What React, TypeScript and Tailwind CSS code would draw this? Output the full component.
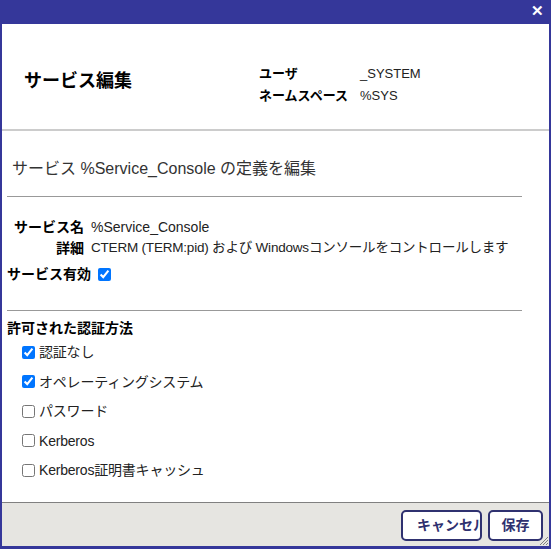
import React from "react";

const FONT = { fontFamily: '"Liberation Sans", Arial, "Noto Sans CJK JP", sans-serif' };

const methods = [
  { label: "認証なし", checked: true },
  { label: "オペレーティングシステム", checked: true },
  { label: "パスワード", checked: false },
  { label: "Kerberos", checked: false },
  { label: "Kerberos証明書キャッシュ", checked: false },
];

function Checkbox({ checked }: { checked: boolean }) {
  return (
    <input
      type="checkbox"
      defaultChecked={checked}
      className="m-0 h-[13px] w-[13px] accent-[#0075ff]"
    />
  );
}

export default function App() {
  return (
    <div className="flex h-[549px] w-[551px] flex-col bg-[#35379a] text-[#222]" style={FONT}>
      {/* title bar */}
      <div className="flex h-[24px] shrink-0 items-start justify-end pr-[7px] pt-[3px]">
        <span className="text-[15px] font-bold leading-[16px] text-white">✕</span>
      </div>

      <div className="mb-[3px] ml-[2px] mr-[2px] flex flex-1 flex-col bg-white">
        {/* header */}
        <div className="flex h-[107px] shrink-0 items-start border-b-2 border-[#cccccc]">
          <h1 className="ml-[22px] mt-[46px] w-[235px] text-[18px] font-bold leading-[22px] text-black">
            サービス編集
          </h1>
          <div className="mt-[41px] grid grid-cols-[101px_auto] gap-y-[4px] text-[13px] leading-[18px]">
            <span className="font-bold text-black">ユーザ</span>
            <span>_SYSTEM</span>
            <span className="font-bold text-black">ネームスペース</span>
            <span>%SYS</span>
          </div>
        </div>

        {/* body */}
        <div className="flex-1 pt-[28px]">
          <h2 className="ml-[10px] text-[16px] leading-[20px] text-[#333]">
            サービス %Service_Console の定義を編集
          </h2>
          <div className="ml-[5px] mt-[17px] h-px w-[515px] bg-[#999]" />

          <div className="ml-[5px] mt-[21px] grid grid-cols-[77px_auto] gap-x-[7px] gap-y-[3px] text-[14px] leading-[18px]">
            <span className="text-right font-bold text-black">サービス名</span>
            <span>%Service_Console</span>
            <span className="text-right font-bold text-black">詳細</span>
            <span className="text-[13.5px] tracking-[-0.2px]">
              CTERM (TERM:pid) および Windowsコンソールをコントロールします
            </span>
          </div>

          <div className="ml-[5px] mt-[8px] flex items-center gap-[7px] text-[14px] leading-[18px]">
            <span className="font-bold text-black">サービス有効</span>
            <Checkbox checked />
          </div>

          <div className="ml-[5px] mt-[27px] h-px w-[515px] bg-[#999]" />

          <div className="ml-[5px] mt-[8px] text-[14px] font-bold leading-[18px] text-black">
            許可された認証方法
          </div>
          <div className="ml-[20px] mt-[6px] flex flex-col gap-[11.5px]">
            {methods.map((m) => (
              <label key={m.label} className="flex items-center gap-[4px] text-[14px] leading-[18px]">
                <Checkbox checked={m.checked} />
                <span className="tracking-[-0.2px]">{m.label}</span>
              </label>
            ))}
          </div>
        </div>

        {/* footer */}
        <div className="relative flex h-[44px] shrink-0 items-center justify-end gap-[6px] border-t border-[#808080] bg-[#e6e5e1] pr-[6px] pt-[1px]">
          <button className="h-[31px] w-[81px] overflow-hidden whitespace-nowrap rounded-[5px] border-2 border-[#2f3170] bg-white pl-[14px] text-left text-[14px] font-bold text-[#2f3170]">
            キャンセル
          </button>
          <button className="h-[31px] w-[55px] rounded-[5px] border-2 border-[#2f3170] bg-white text-[14px] font-bold text-[#2f3170]">
            保存
          </button>
          <svg className="absolute bottom-0 right-0" width="12" height="12" viewBox="0 0 12 12">
            <path d="M11 3 L3 11 M11 6 L6 11 M11 9 L9 11" stroke="#808080" strokeWidth="1" />
          </svg>
        </div>
      </div>
    </div>
  );
}
